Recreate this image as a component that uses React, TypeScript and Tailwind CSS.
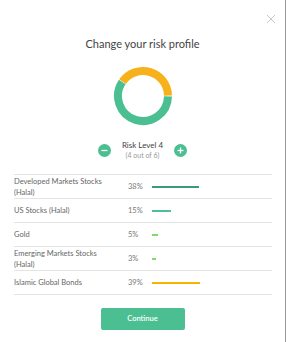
import React from "react";

const rows = [
  { name: ["Developed Markets Stocks", "(Halal)"], pct: 38, color: "bg-[#3b9a78]" },
  { name: ["US Stocks (Halal)"], pct: 15, color: "bg-[#4cc096]" },
  { name: ["Gold"], pct: 5, color: "bg-[#82d96c]" },
  { name: ["Emerging Markets Stocks", "(Halal)"], pct: 3, color: "bg-[#82d96c]" },
  { name: ["Islamic Global Bonds"], pct: 39, color: "bg-[#f7b500]" },
];

function pt(cx: number, cy: number, r: number, deg: number) {
  const a = (deg * Math.PI) / 180;
  return [cx + r * Math.sin(a), cy - r * Math.cos(a)];
}

function arc(cx: number, cy: number, r: number, a0: number, a1: number) {
  const [x0, y0] = pt(cx, cy, r, a0);
  const [x1, y1] = pt(cx, cy, r, a1);
  const large = a1 - a0 > 180 ? 1 : 0;
  return `M ${x0} ${y0} A ${r} ${r} 0 ${large} 1 ${x1} ${y1}`;
}

function Donut() {
  const c = 30;
  const r = 25;
  return (
    <svg width="60" height="60" viewBox="0 0 60 60">
      <path d={arc(c, c, r, 91, 304)} stroke="#4bbf92" strokeWidth="8" fill="none" />
      <path d={arc(c, c, r, -55, 89)} stroke="#f7b21b" strokeWidth="8" fill="none" />
    </svg>
  );
}

function RoundBtn({ plus }: { plus?: boolean }) {
  return (
    <div className="w-[13px] h-[13px] rounded-full bg-[#4bbf92] flex items-center justify-center">
      <svg width="7" height="7" viewBox="0 0 7 7">
        <path d="M0.5 3.5 H6.5" stroke="white" strokeWidth="1.3" />
        {plus && <path d="M3.5 0.5 V6.5" stroke="white" strokeWidth="1.3" />}
      </svg>
    </div>
  );
}

export default function App() {
  return (
    <div
      className="relative w-[287px] h-[342px] bg-white overflow-hidden"
      style={{ fontFamily: "Lato, 'Open Sans', sans-serif" }}
    >
      <div className="absolute top-0 right-[1px] w-[1px] h-full bg-[#9a9a9a]" />
      <div className="absolute top-[14px] left-[266px]">
        <svg width="10" height="10" viewBox="0 0 10 10">
          <path d="M1 1 L9 9 M9 1 L1 9" stroke="#c8c8c8" strokeWidth="1" />
        </svg>
      </div>
      <div className="flex flex-col items-center pr-[2px]">
        <div className="mt-[35px] text-[11px] leading-[18px] text-[#444]">
          Change your risk profile
        </div>
        <div className="mt-[13px] h-[60px]">
          <Donut />
        </div>
        <div className="mt-[14px] flex items-center">
          <RoundBtn />
          <div className="w-[63px] flex flex-col items-center">
            <div className="text-[8px] leading-[11px] text-[#444]">Risk Level 4</div>
            <div className="text-[7px] leading-[9px] text-[#9a9a9a]">(4 out of 6)</div>
          </div>
          <RoundBtn plus />
        </div>
      </div>
      <div className="mt-[14px] ml-[14px] w-[258px] border-t border-[#e4e4e4]">
        {rows.map((row, i) => (
          <div
            key={i}
            className="h-[24px] flex items-center border-b border-[#e4e4e4] text-[7.5px] text-[#666]"
          >
            <div className="w-[114px] leading-[11px]">
              {row.name.map((n, j) => (
                <div key={j}>{n}</div>
              ))}
            </div>
            <div className="w-[24px] text-[#777]">{row.pct}%</div>
            <div className={`h-[2px] ${row.color}`} style={{ width: `${row.pct * 1.24}px` }} />
          </div>
        ))}
      </div>
      <div className="flex justify-center mt-[13px] pr-[2px]">
        <button className="w-[84px] h-[22px] rounded-[2px] bg-[#4bbf92] text-white text-[7.5px] font-semibold">
          Continue
        </button>
      </div>
    </div>
  );
}
